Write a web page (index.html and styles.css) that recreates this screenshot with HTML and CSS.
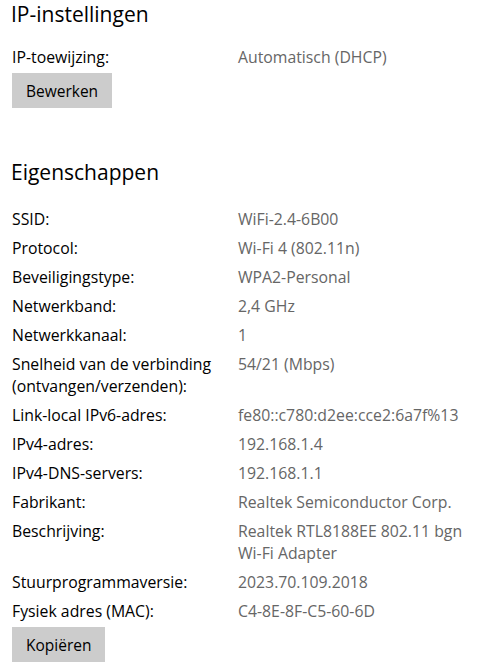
FILE: index.html
```html
<!DOCTYPE html>
<html lang="nl">
<head>
    <meta charset="UTF-8">
    <meta name="viewport" content="width=device-width, initial-scale=1.0">
    <title>Wi-Fi eigenschappen</title>
    <link rel="stylesheet" href="styles.css">
</head>
<body>
    <div class="page">
        <section class="settings-group">
            <h2 class="section-title">IP-instellingen</h2>
            <dl class="props">
                <dt>IP-toewijzing:</dt>
                <dd>Automatisch (DHCP)</dd>
            </dl>
            <button class="btn">Bewerken</button>
        </section>

        <section class="settings-group">
            <h2 class="section-title">Eigenschappen</h2>
            <dl class="props">
                <dt>SSID:</dt>
                <dd>WiFi-2.4-6B00</dd>
                <dt>Protocol:</dt>
                <dd>Wi-Fi 4 (802.11n)</dd>
                <dt>Beveiligingstype:</dt>
                <dd>WPA2-Personal</dd>
                <dt>Netwerkband:</dt>
                <dd>2,4 GHz</dd>
                <dt>Netwerkkanaal:</dt>
                <dd>1</dd>
                <dt>Snelheid van de verbinding (ontvangen/verzenden):</dt>
                <dd>54/21 (Mbps)</dd>
                <dt>Link-local IPv6-adres:</dt>
                <dd>fe80::c780:d2ee:cce2:6a7f%13</dd>
                <dt>IPv4-adres:</dt>
                <dd>192.168.1.4</dd>
                <dt>IPv4-DNS-servers:</dt>
                <dd>192.168.1.1</dd>
                <dt>Fabrikant:</dt>
                <dd>Realtek Semiconductor Corp.</dd>
                <dt>Beschrijving:</dt>
                <dd>Realtek RTL8188EE 802.11 bgn Wi-Fi Adapter</dd>
                <dt>Stuurprogrammaversie:</dt>
                <dd>2023.70.109.2018</dd>
                <dt>Fysiek adres (MAC):</dt>
                <dd>C4-8E-8F-C5-60-6D</dd>
            </dl>
            <button class="btn">Kopiëren</button>
        </section>
    </div>
</body>
</html>
```

FILE: styles.css
```css
body {
    font-family: "Open Sans", "Noto Sans", sans-serif;
    margin: 0;
    padding: 0;
    background: #fff;
    color: #000;
}

.page {
    padding: 0 12px;
}

.settings-group + .settings-group {
    margin-top: 50px;
}

.section-title {
    font-size: 21px;
    font-weight: 400;
    line-height: 28px;
    margin: 0 0 18px -1px;
}

.settings-group + .settings-group .section-title {
    margin-bottom: 22px;
}

.props {
    display: grid;
    grid-template-columns: 226px 1fr;
    row-gap: 7px;
    margin: 0;
    font-size: 15.8px;
    line-height: 22px;
}

.props dt {
    margin: 0;
    padding-right: 10px;
}

.props dd {
    margin: 0;
    color: #666;
}

.btn {
    display: block;
    margin-top: 5px;
    height: 35px;
    padding: 0 14px;
    background: #ccc;
    border: none;
    font-family: inherit;
    font-size: 15.5px;
    color: #000;
    cursor: pointer;
}
```
